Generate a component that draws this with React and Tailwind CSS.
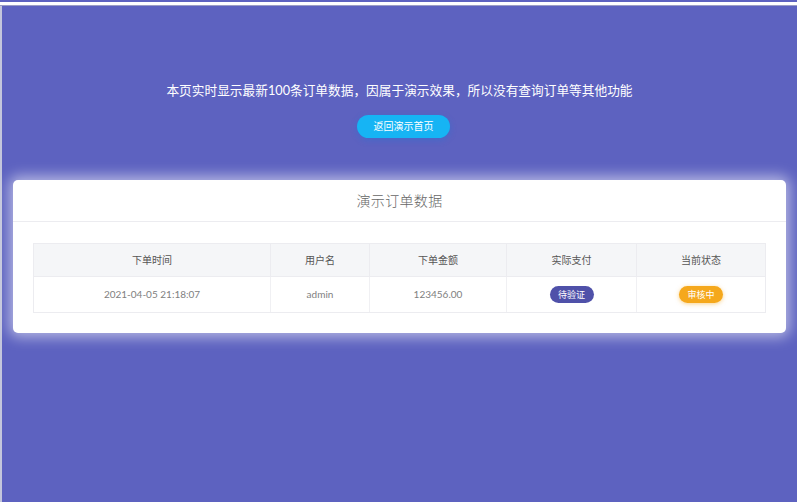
import React from 'react';

const columns = [
  { label: '下单时间', width: 'w-[237px]' },
  { label: '用户名', width: 'w-[99px]' },
  { label: '下单金额', width: 'w-[137px]' },
  { label: '实际支付', width: 'w-[130px]' },
  { label: '当前状态', width: 'flex-1' },
];

const font = { fontFamily: '"Lato", "Noto Sans CJK SC", sans-serif' };

export default function App() {
  return (
    <div className="w-[797px] h-[502px] overflow-hidden bg-[#5d62c0] flex flex-col" style={font}>
      {/* top browser edge */}
      <div className="h-[2px] bg-[#5d62c0]" />
      <div className="h-[3px] bg-white" />
      <div className="h-px bg-[#9a9cc4]" />

      <div className="flex-1 flex flex-col border-l-2 border-[#c4c6dc]">
        <div className="pt-[75px] flex flex-col items-center">
          <p className="text-white text-[12.7px] leading-[18px]">
            本页实时显示最新100条订单数据，因属于演示效果，所以没有查询订单等其他功能
          </p>
          <button className="mt-[16px] ml-[8px] w-[93px] h-[23px] rounded-full bg-[#16b4f4] text-white text-[10px] shadow-[0_2px_6px_rgba(20,120,220,0.35)]">
            返回演示首页
          </button>
        </div>

        {/* card */}
        <div className="mt-[42px] ml-[11px] w-[773px] bg-white rounded-[5px] shadow-[0_0_14px_4px_rgba(255,255,255,0.55)]">
          <div className="h-[42px] flex items-center justify-center border-b border-[#ececf0]">
            <h2 className="text-[14px] text-[#666] font-light tracking-wide">演示订单数据</h2>
          </div>
          <div className="px-[20px] pt-[21px] pb-[20px]">
            <div className="border border-[#ececf0]">
              <div className="flex h-[33px] bg-[#f5f6f8] border-b border-[#ececf0]">
                {columns.map((c, i) => (
                  <div
                    key={c.label}
                    className={`${c.width} flex items-center justify-center text-[10px] text-[#555] ${i < 4 ? 'border-r border-[#ececf0]' : ''}`}
                  >
                    {c.label}
                  </div>
                ))}
              </div>
              <div className="flex h-[35px] text-[10px] text-[#808080]">
                <div className="w-[237px] flex items-center justify-center border-r border-[#f0f0f3]">2021-04-05 21:18:07</div>
                <div className="w-[99px] flex items-center justify-center border-r border-[#f0f0f3]">admin</div>
                <div className="w-[137px] flex items-center justify-center border-r border-[#f0f0f3]">123456.00</div>
                <div className="w-[130px] flex items-center justify-center border-r border-[#f0f0f3]">
                  <span className="w-[44px] h-[17px] rounded-full bg-[#4f51a9] text-white text-[9px] flex items-center justify-center">待验证</span>
                </div>
                <div className="flex-1 flex items-center justify-center">
                  <span className="w-[44px] h-[17px] rounded-full bg-[#f5a81c] text-white text-[9px] flex items-center justify-center shadow-[0_1px_4px_rgba(245,168,28,0.5)]">审核中</span>
                </div>
              </div>
            </div>
          </div>
        </div>
      </div>
    </div>
  );
}
